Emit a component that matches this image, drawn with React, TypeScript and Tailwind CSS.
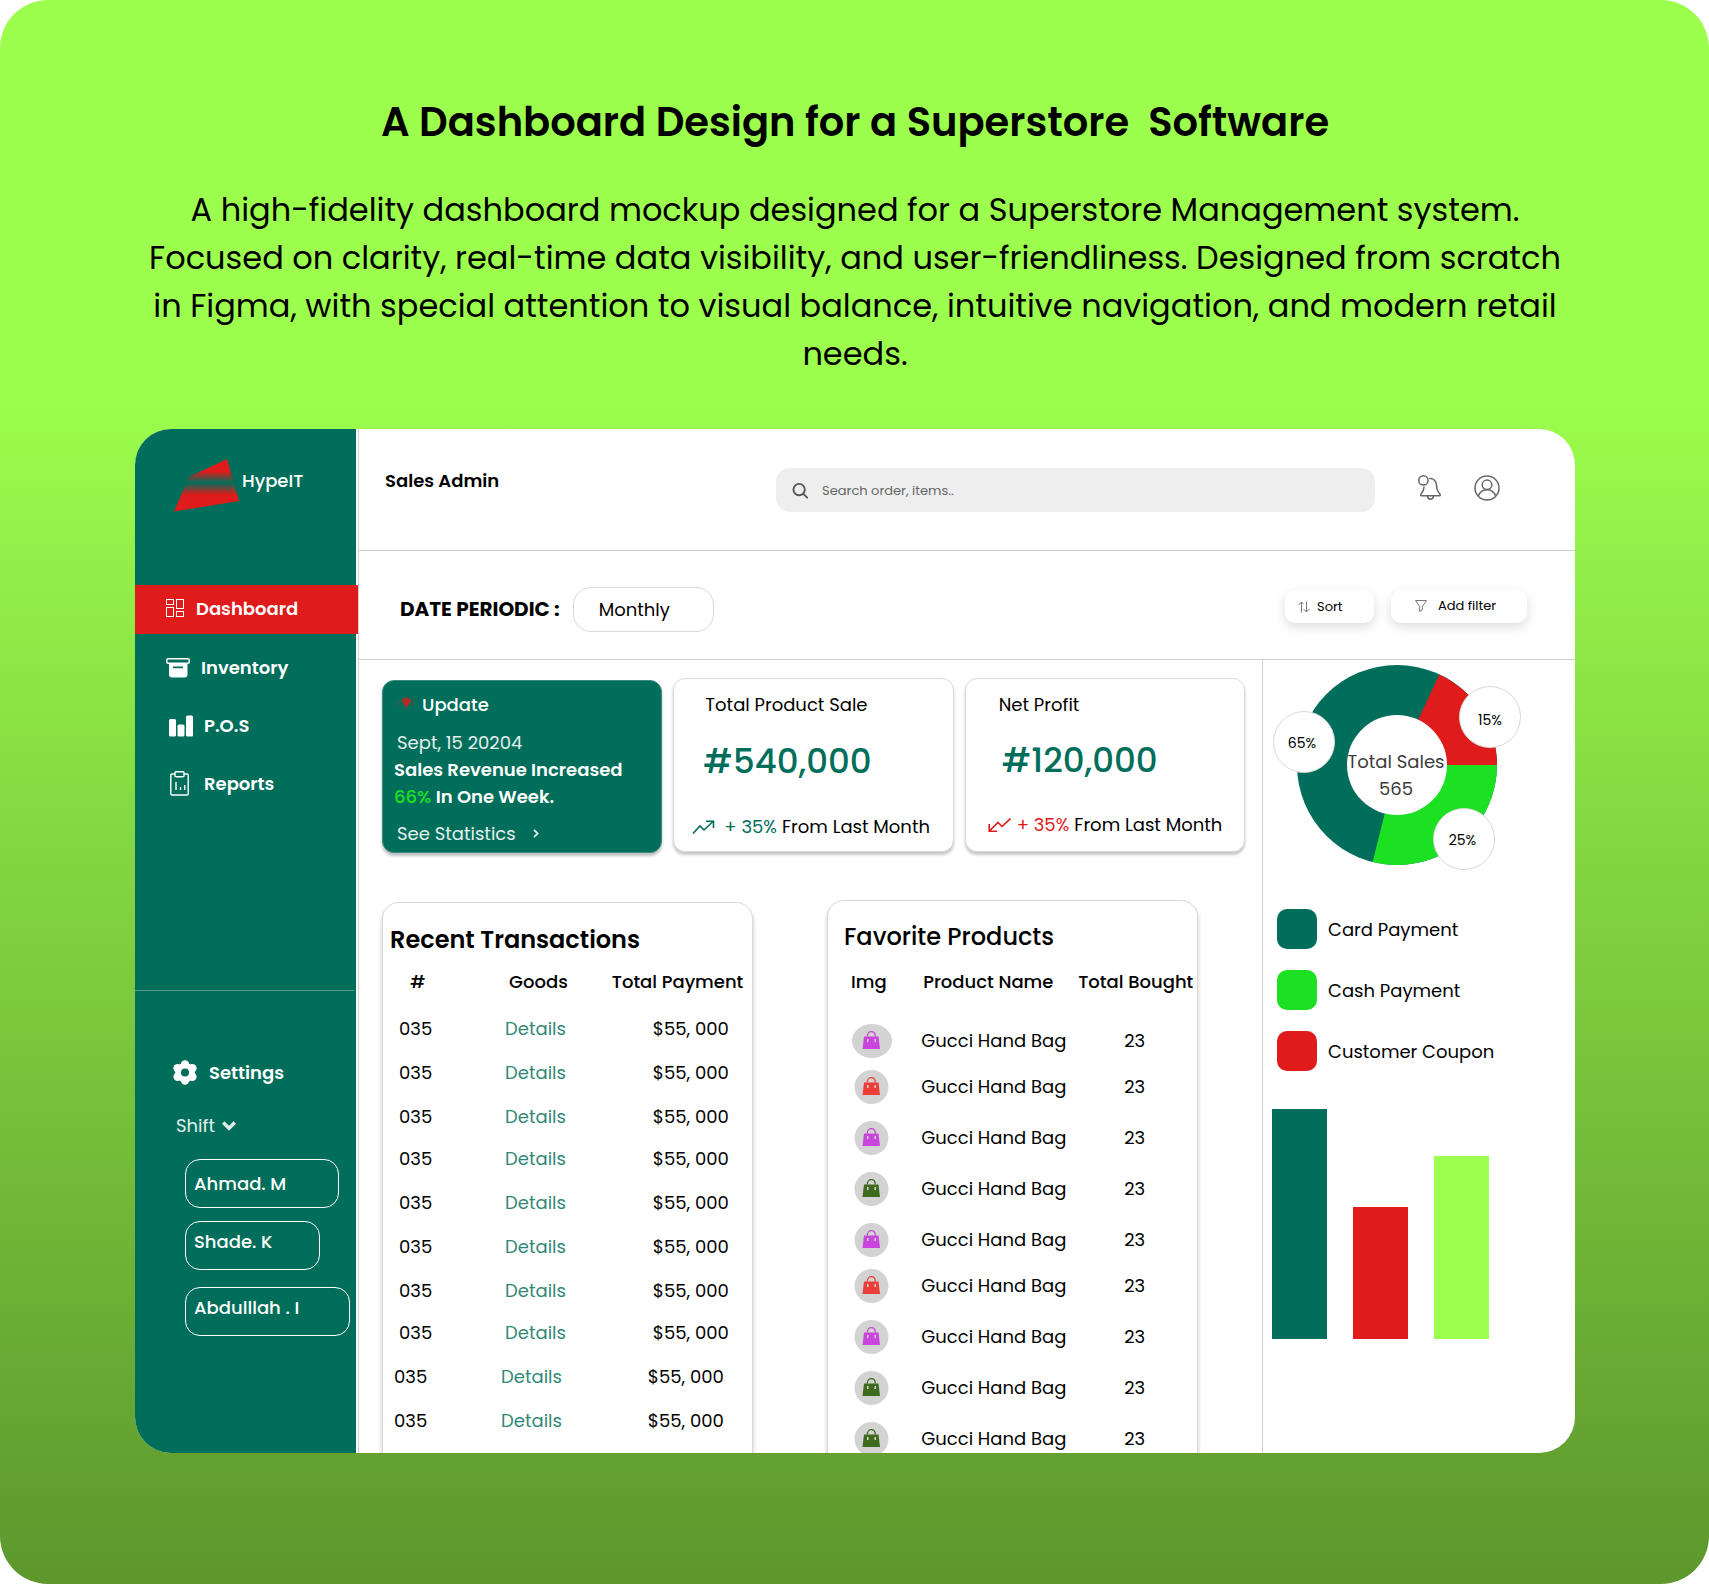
import React from "react";

const TEAL = "#006E5A";
const RED = "#DF1B1B";
const GREEN = "#1CE022";

function Logo() {
  return (
    <svg width="65" height="53" viewBox="0 0 65 53" aria-hidden="true">
      <defs>
        <linearGradient id="logoFill" x1="0" y1="0" x2="0" y2="1">
          <stop offset="0.24" stopColor={RED} />
          <stop offset="0.45" stopColor={TEAL} />
          <stop offset="0.68" stopColor={RED} />
        </linearGradient>
      </defs>
      <path d="M53 0L65 42L0 52.500L15 18Z" fill="url(#logoFill)" />
    </svg>
  );
}

function DashboardIcon() {
  return (
    <svg width="18" height="20" viewBox="0 0 18 20" fill="none" stroke="white" aria-hidden="true">
      <rect x="0.500" y="0.500" width="7" height="5" />
      <rect x="10.500" y="0.500" width="7" height="9" />
      <rect x="0.500" y="8.500" width="7" height="9" />
      <rect x="10.500" y="12.500" width="7" height="5" />
    </svg>
  );
}

function InventoryIcon() {
  return (
    <svg width="24" height="20" viewBox="0 0 24 20" aria-hidden="true">
      <rect x="0.750" y="0.750" width="22.500" height="4.500" rx="1.500" fill={TEAL} stroke="white" strokeWidth="1.500" />
      <path d="M3 6H21.500V16.500Q21.500 19.500 18.500 19.500H6Q3 19.500 3 16.500Z" fill="white" />
      <rect x="7" y="8.500" width="10" height="1.700" fill={TEAL} />
    </svg>
  );
}

function PosIcon() {
  return (
    <svg width="24" height="22" viewBox="0 0 24 22" fill="white" aria-hidden="true">
      <rect x="0" y="4" width="7" height="17.500" rx="1.500" />
      <rect x="8.500" y="9.500" width="7" height="12" rx="1.500" />
      <rect x="17" y="0.500" width="7" height="21" rx="1.500" />
    </svg>
  );
}

function ReportsIcon() {
  return (
    <svg width="19" height="25" viewBox="0 0 19 25" fill="none" stroke="white" strokeWidth="1.400" aria-hidden="true">
      <path d="M5 3H2Q0.800 3 0.800 4.200V22.800Q0.800 24 2 24H17Q18.200 24 18.200 22.800V4.200Q18.200 3 17 3H14" />
      <rect x="5" y="0.800" width="9" height="5" rx="1" />
      <path d="M6 11V19M10.500 16V19M14.800 14V19" />
    </svg>
  );
}

function GearIcon() {
  return (
    <svg width="24" height="25" viewBox="0 0 24 25" fill="white" aria-hidden="true">
      <circle cx="12" cy="12.500" r="9.800" />
      <circle cx="12" cy="4.400" r="4.200" />
      <circle cx="12" cy="20.600" r="4.200" />
      <circle cx="4.600" cy="8.300" r="4.200" />
      <circle cx="19.400" cy="8.300" r="4.200" />
      <circle cx="4.600" cy="16.700" r="4.200" />
      <circle cx="19.400" cy="16.700" r="4.200" />
      <circle cx="12" cy="12.500" r="4" fill={TEAL} />
    </svg>
  );
}

function BellIcon() {
  return (
    <svg width="24" height="26" viewBox="0 0 24 26" fill="none" stroke="#666" strokeWidth="1.500" strokeLinecap="round" strokeLinejoin="round" aria-hidden="true">
      <circle cx="5.400" cy="5.400" r="4.600" />
      <path d="M11.800 3.600C15.500 3.300 18.300 6 18.500 10C18.700 14.500 19 16 21.500 18.500C22.700 20 22.300 20.700 21.500 20.700H3.500C2.600 20.700 2.300 19.700 3.200 18.700C5.300 16.500 6 14.500 6 12" />
      <path d="M9.500 21.200C10 25.400 15 25.400 15.500 21.200" />
    </svg>
  );
}

function UserIcon() {
  return (
    <svg width="26" height="26" viewBox="0 0 26 26" fill="none" stroke="#666" strokeWidth="1.500" aria-hidden="true">
      <circle cx="13" cy="13" r="12" />
      <circle cx="13" cy="9.800" r="4.800" />
      <path d="M4.300 21C6 16.700 9 14.700 13 14.700C17 14.700 20 16.700 21.700 21" />
    </svg>
  );
}

function BagIcon({ color, wide }: { color: string; wide?: boolean }) {
  return (
    <svg width="40" height="34" viewBox="0 0 40 34" aria-hidden="true">
      <ellipse cx={wide ? 20 : 19.500} cy="17" rx={wide ? 20 : 17} ry="17" fill="#D3D3D3" />
      <path d="M12 12.500H26.500L28 25H10.500Z" fill={color} />
      <path d="M15.300 12.500C15.300 6 23.300 6 23.300 12.500" fill="none" stroke={color} strokeWidth="1.300" />
      <path d="M15 15h1.500v3h-1.500zM22.500 15h1.500v3h-1.500z" fill="#D3D3D3" />
    </svg>
  );
}

const navItems = [
  { label: "Dashboard", icon: <DashboardIcon />, style: "relative z-10 -mr-0.5 bg-[#DF1B1B] pl-[31px] gap-3 pb-0.5" },
  { label: "Inventory", icon: <InventoryIcon />, style: "pl-[31px] gap-[11px]" },
  { label: "P.O.S", icon: <PosIcon />, style: "pl-[34px] gap-[11px]" },
  { label: "Reports", icon: <ReportsIcon />, style: "pl-[35px] gap-[15px]" },
];

const staff = [
  { name: "Ahmad. M", style: "w-[154px] items-center" },
  { name: "Shade. K", style: "w-[135px] mt-[13px] items-start pt-1.5" },
  { name: "Abdulllah . I", style: "w-[165px] mt-[17px] items-start pt-1.5" },
];

function Sidebar() {
  return (
    <aside className="flex w-[221px] shrink-0 flex-col bg-[#006E5A] text-white">
      <div className="flex h-[156px] items-start gap-[3px] pt-[30px] pl-[39px]">
        <Logo />
        <span className="pt-2 text-[18px] leading-[27px] font-medium">HypeIT</span>
      </div>
      <nav className="flex flex-col gap-[9px]">
        {navItems.map((n) => (
          <a key={n.label} href="#" className={`flex h-[49px] items-center text-[18px] font-semibold ${n.style}`}>
            {n.icon}
            {n.label}
          </a>
        ))}
      </nav>
      <hr className="mt-[182px] mr-0.5 border-[#5A9686]" />
      <a href="#" className="mt-[68px] flex items-center gap-3 pl-[38px] text-[18px] leading-[27px] font-semibold">
        <GearIcon />
        Settings
      </a>
      <button className="mt-[26px] flex items-center gap-[7px] pl-[41px] text-[18px] leading-[27px] text-white/90">
        Shift
        <svg width="14" height="10" viewBox="0 0 14 10" fill="none" stroke="#DDEBE8" strokeWidth="3.500" aria-hidden="true">
          <path d="M1.200 1.500L7 7.200L12.800 1.500" />
        </svg>
      </button>
      <ul className="mt-5 flex flex-col pl-[50px]">
        {staff.map((s) => (
          <li key={s.name} className={`flex h-[49px] rounded-[15px] border border-white pl-2 text-[18px] leading-[27px] font-medium ${s.style}`}>
            {s.name}
          </li>
        ))}
      </ul>
    </aside>
  );
}

function TopBar() {
  return (
    <header className="flex h-[122px] shrink-0 items-center border-b border-[#CFCFCF] pr-[75px] pl-[26px]">
      <h2 className="w-[391px] shrink-0 pb-[18px] text-[18px] leading-[27px] font-semibold">Sales Admin</h2>
      <label className="flex h-11 flex-1 items-center gap-[13px] rounded-[14px] bg-[#EEEEEE] pt-0.5 pl-4">
        <svg width="18" height="18" viewBox="0 0 18 18" fill="none" stroke="#555" strokeWidth="2" strokeLinecap="round" aria-hidden="true">
          <circle cx="7.500" cy="7.500" r="6" />
          <path d="M12 12L16 16" />
        </svg>
        <input type="text" aria-label="Search" placeholder="Search order, items.." className="w-full bg-transparent text-[13px] outline-none placeholder:text-[#666]" />
      </label>
      <div className="ml-[43px] flex gap-8 pb-[3px]">
        <button aria-label="Notifications"><BellIcon /></button>
        <button aria-label="Account"><UserIcon /></button>
      </div>
    </header>
  );
}

function FilterBar() {
  return (
    <div className="flex h-[109px] shrink-0 items-center border-b border-[#CFCFCF] pt-2 pr-12 pl-[41px]">
      <label htmlFor="period" className="text-[20px] font-bold whitespace-nowrap">DATE PERIODIC :</label>
      <select id="period" className="ml-[13px] h-[45px] w-[141px] appearance-none rounded-[18px] border border-[#D9D9D9] bg-white pl-[25px] text-[18px]">
        <option>Monthly</option>
      </select>
      <div className="ml-auto flex gap-[17px] pb-1.5 text-[13px]">
        <button className="flex h-[33px] w-[89px] items-center gap-[7px] rounded-[10px] pt-0.5 pl-[13px] shadow-[0_4px_12px_rgba(0,0,0,0.14)]">
          <svg width="12" height="12" viewBox="0 0 12 12" fill="none" stroke="#777" aria-hidden="true">
            <path d="M3.500 11.500V1M0.500 4L3.500 1L5.500 3M8.500 0.500V11M5.500 8L8.500 11L11.500 8" />
          </svg>
          Sort
        </button>
        <button className="flex h-[33px] w-[136px] items-center gap-[11px] rounded-[10px] pl-6 shadow-[0_4px_12px_rgba(0,0,0,0.14)]">
          <svg width="12" height="12" viewBox="0 0 12 12" fill="none" stroke="#777" aria-hidden="true">
            <path d="M0.500 0.500H11.500L7.300 6.500V10L4.700 11.500V6.500Z" />
          </svg>
          Add filter
        </button>
      </div>
    </div>
  );
}

function StatCards() {
  const white = "rounded-[12px] border border-[#D9D9D9] bg-white pt-3 pb-[11px] shadow-[0_3px_3px_rgba(0,0,0,0.22)]";
  return (
    <section className="grid grid-cols-3 items-start gap-[11px]">
      <article className="mt-0.5 rounded-[12px] border border-[#3C8B7C] bg-[#006E5A] pt-2.5 pb-[5px] pl-[11px] text-[18px] leading-[27px] text-white shadow-[0_3px_3px_rgba(0,0,0,0.25)]">
        <h3 className="flex items-center gap-[7px] pl-1 font-medium">
          <svg width="17" height="16" viewBox="0 0 17 16" fill="#A92F2B" aria-hidden="true">
            <path d="M4 2L7 1L8.500 0L10 1L13 2L12 4V7L10 8.500L8.500 11.500L7 8.500L5 7V4Z" />
            <path d="M4 2H13V4L12 7L8.500 9L5 7L4 4Z" />
            <path d="M2 3Q0 6 2 9M15 3Q17 6 15 9" fill="none" stroke="#7A4A3E" strokeWidth="0.800" />
          </svg>
          Update
        </h3>
        <p className="mt-[11px] pl-[3px] text-white/90">Sept, 15 20204</p>
        <p className="font-semibold whitespace-nowrap">
          Sales Revenue Increased
          <br />
          <span className="font-medium text-[#1CE022]">66%</span> In One Week.
        </p>
        <a href="#" className="mt-[10px] flex items-center gap-[17px] pl-[3px] text-white/90">
          See Statistics
          <svg width="6" height="9" viewBox="0 0 6 9" fill="none" stroke="#DDEBE8" strokeWidth="1.800" aria-hidden="true">
            <path d="M1 1L4.800 4.500L1 8" />
          </svg>
        </a>
      </article>

      <article className={white}>
        <h3 className="pl-[31px] text-[18px] leading-[27px]">Total Product Sale</h3>
        <p className="mt-4 pl-[29px] text-[34px] leading-[54px] font-medium text-[#006E5A]">#540,000</p>
        <p className="mt-[25px] flex items-center pl-[18px] text-[18px] leading-[27px] whitespace-nowrap">
          <svg width="23" height="14" viewBox="0 0 23 14" fill="none" stroke={TEAL} strokeWidth="1.600" aria-hidden="true">
            <path d="M1 13.500L8 6L12 10L21 1.500M14 1.200H21.500V8" />
          </svg>
          <span className="mr-[5px] ml-[9px] text-[#006E5A]">+ 35%</span> From Last Month
        </p>
      </article>

      <article className={white}>
        <h3 className="pl-[33px] text-[18px] leading-[27px]">Net Profit</h3>
        <p className="mt-[15px] pl-9 text-[34px] leading-[54px] font-medium text-[#006E5A]">#120,000</p>
        <p className="mt-6 mb-0.5 flex items-center pl-[22px] text-[18px] leading-[27px] whitespace-nowrap">
          <svg width="23" height="14" viewBox="0 0 23 14" fill="none" stroke={RED} strokeWidth="1.600" aria-hidden="true">
            <path d="M22.500 0.500L14 8.500L10 4.500L1.500 13M1.200 6V13.200H9" />
          </svg>
          <span className="mr-[5px] ml-[6px] text-[#DF1B1B]">+ 35%</span> From Last Month
        </p>
      </article>
    </section>
  );
}

const transactions = [
  { step: "h-11" }, { step: "h-11" }, { step: "h-[42px]" }, { step: "h-11" },
  { step: "h-11" }, { step: "h-11" }, { step: "h-[42px]" }, { step: "h-11" },
  { step: "h-11", outdent: true }, { step: "h-11", outdent: true },
];

function Transactions() {
  return (
    <section className="mt-0.5 rounded-t-[17px] border border-[#D9D9D9] bg-white shadow-[0_3px_4px_rgba(0,0,0,0.22)]">
      <h3 className="pt-[19px] pl-[7px] text-[24px] leading-9 font-semibold">Recent Transactions</h3>
      <table className="mt-[10px] w-full table-fixed text-left text-[18px] leading-[27px] whitespace-nowrap">
        <thead>
          <tr className="h-[47px] align-top">
            <th className="w-[32%] pl-[27px] font-medium">#</th>
            <th className="w-[30%] pl-2 font-medium">Goods</th>
            <th className="font-medium">Total Payment</th>
          </tr>
        </thead>
        <tbody>
          {transactions.map((t, i) => (
            <tr key={i} className={`${t.step} align-top`}>
              <td className={t.outdent ? "pl-[11px]" : "pl-4"}>035</td>
              <td className={t.outdent ? "pl-0" : "pl-1"}>
                <a href="#" className="text-[#328876]">Details</a>
              </td>
              <td className={t.outdent ? "pl-9" : "pl-[41px]"}>$55, 000</td>
            </tr>
          ))}
        </tbody>
      </table>
    </section>
  );
}

const PURPLE = "#C846DC";
const CORAL = "#EC3E38";
const OLIVE = "#3D6A1C";

const products = [
  { color: PURPLE, step: "h-[46px]", wide: true },
  { color: CORAL, step: "h-[51px]" },
  { color: PURPLE, step: "h-[51px]" },
  { color: OLIVE, step: "h-[51px]" },
  { color: PURPLE, step: "h-[46px]" },
  { color: CORAL, step: "h-[51px]" },
  { color: PURPLE, step: "h-[51px]" },
  { color: OLIVE, step: "h-[51px]" },
  { color: OLIVE, step: "h-[51px]" },
];

function Products() {
  return (
    <section className="rounded-t-[17px] border border-[#D9D9D9] bg-white shadow-[0_3px_4px_rgba(0,0,0,0.22)]">
      <h3 className="pt-[18px] pl-4 text-[24px] leading-9 font-medium">Favorite Products</h3>
      <table className="mt-[13px] w-full table-fixed text-left text-[18px] leading-[27px] whitespace-nowrap">
        <thead>
          <tr className="h-14 align-top">
            <th className="w-[25%] pl-[23px] font-medium">Img</th>
            <th className="w-[42%] pl-[3px] font-medium">Product Name</th>
            <th className="pl-[3px] font-medium">Total Bought</th>
          </tr>
        </thead>
        <tbody>
          {products.map((p, i) => (
            <tr key={i} className={`${p.step} align-top`}>
              <td className="pl-6"><BagIcon color={p.color} wide={p.wide} /></td>
              <td className="pt-[3px] pl-[1px]">Gucci Hand Bag</td>
              <td className="pt-[3px] pl-[49px]">23</td>
            </tr>
          ))}
        </tbody>
      </table>
    </section>
  );
}

const legend = [
  { label: "Card Payment", color: "bg-[#006E5A]" },
  { label: "Cash Payment", color: "bg-[#1CE022]" },
  { label: "Customer Coupon", color: "bg-[#DF1B1B]" },
];

const bars = [
  { value: 230, color: "bg-[#006E5A]" },
  { value: 132, color: "bg-[#DF1B1B]" },
  { value: 183, color: "bg-[#9DFF4F]" },
];

const bubble = "absolute flex size-[62px] items-center justify-center rounded-full border border-[#D9D9D9] bg-white text-[14px]";

function SalesPanel() {
  return (
    <aside className="w-[313px] shrink-0 border-l border-[#CFCFCF]">
      <div className="relative mt-[5px] ml-[34px] size-[200px]">
        <svg width="200" height="200" viewBox="0 0 200 200" role="img" aria-label="Sales share by payment">
          <circle cx="100" cy="100" r="100" fill={TEAL} />
          <path d="M100 100L200 100A100 100 0 0 0 142.300 9.400Z" fill={RED} />
          <path d="M100 100L200 100A100 100 0 0 1 75.600 197Z" fill={GREEN} />
          <circle cx="100" cy="100" r="50" fill="white" />
        </svg>
        <p className="absolute inset-x-0 top-[83px] pr-0.5 text-center text-[18px] leading-[27px] text-[#3C3C3C]">
          Total Sales
          <br />
          565
        </p>
        <span className={`${bubble} top-[46px] left-[-24px] pt-0.5 pr-1`}>65%</span>
        <span className={`${bubble} top-[21px] left-[162px] pt-1.5`}>15%</span>
        <span className={`${bubble} top-[143px] left-[136px] pt-0.5 pr-[3px]`}>25%</span>
      </div>
      <ul className="mt-11 ml-[14px] flex flex-col gap-[21px] text-[18px]">
        {legend.map((l) => (
          <li key={l.label} className="flex items-center gap-[11px]">
            <span className={`size-10 rounded-[10px] ${l.color}`} />
            {l.label}
          </li>
        ))}
      </ul>
      <div className="mt-[38px] ml-[9px] flex items-end gap-[26px]">
        {bars.map((b) => (
          <div key={b.color} className={`w-[55px] ${b.color}`} style={{ height: b.value }} />
        ))}
      </div>
    </aside>
  );
}

export default function App() {
  return (
    <div className="flex h-screen min-h-[1300px] flex-col rounded-[48px] bg-[linear-gradient(180deg,#9CFF4D_0%,#9CFF4D_24%,#5D972D_100%)] pr-[134px] pb-[131px] pl-[135px] font-[Poppins,Inter,sans-serif] text-black">
      <h1 className="pt-[92px] text-center text-[40px] leading-[60px] font-semibold whitespace-pre">A Dashboard Design for a Superstore  Software</h1>
      <p className="mt-[34px] text-center text-[32px] leading-[48px] whitespace-nowrap">
        A high-fidelity dashboard mockup designed for a Superstore Management system.
        <br />
        Focused on clarity, real-time data visibility, and user-friendliness. Designed from scratch
        <br />
        in Figma, with special attention to visual balance, intuitive navigation, and modern retail
        <br />
        needs.
      </p>
      <div className="mt-[51px] flex min-h-0 flex-1 overflow-hidden rounded-[36px] bg-white">
        <Sidebar />
        <div className="ml-0.5 flex min-w-0 flex-1 flex-col border-l border-[#CFCFCF]">
          <TopBar />
          <FilterBar />
          <div className="flex min-h-0 flex-1">
            <main className="min-w-0 flex-1 pt-[18px] pr-[17px] pl-[23px]">
              <StatCards />
              <div className="mt-[47px] grid grid-cols-2 gap-[74px] pr-[47px]">
                <Transactions />
                <Products />
              </div>
            </main>
            <SalesPanel />
          </div>
        </div>
      </div>
    </div>
  );
}
